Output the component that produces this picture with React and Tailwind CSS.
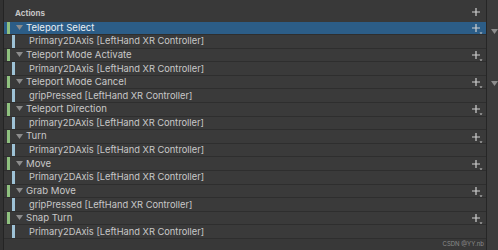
import React from "react";

const actions = [
  { name: "Teleport Select", binding: "Primary2DAxis [LeftHand XR Controller]", selected: true },
  { name: "Teleport Mode Activate", binding: "Primary2DAxis [LeftHand XR Controller]" },
  { name: "Teleport Mode Cancel", binding: "gripPressed [LeftHand XR Controller]" },
  { name: "Teleport Direction", binding: "primary2DAxis [LeftHand XR Controller]" },
  { name: "Turn", binding: "Primary2DAxis [LeftHand XR Controller]" },
  { name: "Move", binding: "Primary2DAxis [LeftHand XR Controller]" },
  { name: "Grab Move", binding: "gripPressed [LeftHand XR Controller]" },
  { name: "Snap Turn", binding: "Primary2DAxis [LeftHand XR Controller]" },
];

function PlusIcon({ withArrow }) {
  return (
    <svg width="12" height="12" viewBox="0 0 12 12" className="shrink-0">
      <path d="M5 1v8M1 5h8" stroke="#d0d0d0" strokeWidth="1.2" />
      {withArrow && <path d="M8.5 9.5h3l-1.5 1.5z" fill="#d0d0d0" />}
    </svg>
  );
}

function Triangle() {
  return (
    <svg width="7" height="6" viewBox="0 0 7 6" className="shrink-0">
      <path d="M0 0h7L3.5 5z" fill="#8c8c8c" />
    </svg>
  );
}

function ActionRow({ action }) {
  return (
    <>
      <div
        className={`flex h-[13.6px] items-center border-b border-[#2e2e2e] ${
          action.selected ? "bg-[#2c5d87]" : "bg-[#3a3a3a]"
        }`}
      >
        <div className="ml-[3px] h-full w-[3px] bg-[#8fc17f]" />
        <div className="ml-[6px] flex flex-1 items-center gap-[3px]">
          <Triangle />
          <span className={`text-[9.6px] ${action.selected ? "text-[#e8eef4]" : "text-[#c8c8c8]"}`}>
            {action.name}
          </span>
        </div>
        <div className="mr-[3px] mt-[2px]">
          <PlusIcon withArrow />
        </div>
      </div>
      <div className="flex h-[13.6px] items-center border-b border-[#2e2e2e] bg-[#3a3a3a]">
        <div className="ml-[8px] h-full w-[3px] bg-[#9ec2d6]" />
        <span className="ml-[14px] text-[9.3px] text-[#c8c8c8]">{action.binding}</span>
      </div>
    </>
  );
}

export default function App() {
  return (
    <div
      className="flex h-[250px] w-[498px] overflow-hidden bg-[#383838]"
      style={{ fontFamily: "Inter, 'Noto Sans', sans-serif" }}
    >
      <div className="w-[3px] bg-[#323232]" />
      <div className="w-px bg-[#242424]" />
      <div className="flex w-[482px] flex-col">
        <div className="flex h-[24.5px] items-center justify-between bg-[#393939] pl-[11px] pr-[3px] pt-[4px]">
          <span className="text-[8px] font-bold text-[#c4c4c4]">Actions</span>
          <PlusIcon />
        </div>
        {actions.map((a) => (
          <ActionRow key={a.name} action={a} />
        ))}
        <div className="flex flex-1 items-end justify-end pb-[2px] pr-[2px]">
          <span className="text-[6px] text-[#8a8a8a]">CSDN @YY.nb</span>
        </div>
      </div>
      <div className="w-px bg-[#262626]" />
      <div className="flex flex-1 flex-col bg-[#3c3c3c] pl-[4px]">
        <div className="h-[29px]" />
        <Triangle />
        <div className="h-[46px]" />
        <Triangle />
      </div>
    </div>
  );
}
